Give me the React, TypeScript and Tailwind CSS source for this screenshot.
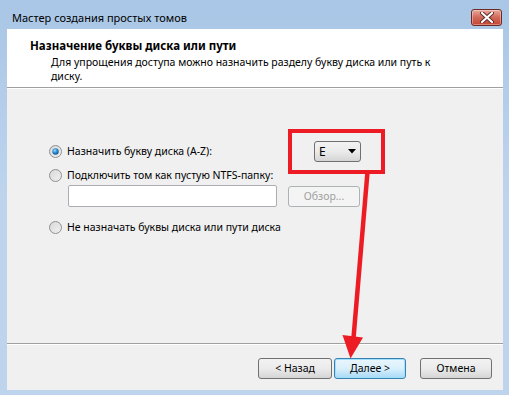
import React from "react";

const font = { fontFamily: '"Noto Sans", "Open Sans", sans-serif' };

function Radio({ checked }: { checked?: boolean }) {
  return (
    <svg width="13" height="13" viewBox="0 0 13 13" className="shrink-0">
      <defs>
        <linearGradient id="rg" x1="0" y1="0" x2="1" y2="1">
          <stop offset="0" stopColor="#d4d4d4" />
          <stop offset="1" stopColor="#f7f7f7" />
        </linearGradient>
        <radialGradient id="dot" cx="0.4" cy="0.35" r="0.7">
          <stop offset="0" stopColor="#a8dcf8" />
          <stop offset="0.5" stopColor="#2a8cd0" />
          <stop offset="1" stopColor="#134e8a" />
        </radialGradient>
      </defs>
      <circle cx="6.5" cy="6.5" r="6" fill="url(#rg)" stroke="#8e8f8f" strokeWidth="1" />
      <circle cx="6.5" cy="6.5" r="4.2" fill="none" stroke="#e2e2e2" strokeWidth="0.8" />
      {checked && <circle cx="6.5" cy="6.5" r="3.2" fill="url(#dot)" />}
    </svg>
  );
}

export default function App() {
  return (
    <div
      className="relative w-[509px] h-[395px] overflow-hidden flex flex-col bg-gradient-to-b from-[#a9c6e6] via-[#bed4ed] to-[#bed4ed] text-[10.5px] text-black"
      style={font}
    >
      {/* Title bar */}
      <div className="h-[29px] flex items-start justify-between pl-[12px] pr-[7px] shrink-0">
        <div className="pt-[10px] text-[11px] leading-[16px] text-black">Мастер создания простых томов</div>
        <div className="mt-[9px] w-[31px] h-[17px] rounded-[3px] border border-[#6b2b24] bg-gradient-to-b from-[#e7a99e] via-[#d0685a] to-[#c8412f] flex items-center justify-center shadow-[inset_0_0_0_1px_rgba(255,255,255,0.35)]">
          <svg width="14" height="11" viewBox="0 0 14 11">
            <path d="M2 1 L12 10 M12 1 L2 10" stroke="#5a2a25" strokeWidth="4" strokeLinecap="round" />
            <path d="M2 1 L12 10 M12 1 L2 10" stroke="#ffffff" strokeWidth="2.2" strokeLinecap="round" />
          </svg>
        </div>
      </div>

      {/* Client area */}
      <div className="flex-1 ml-[7px] mr-[6px] mb-[5px] flex flex-col bg-[#f0f0f0]">
        {/* Header */}
        <div className="h-[59px] bg-white border-b border-[#a0a0a0] pl-[23px] pt-[9px] shrink-0">
          <div className="font-bold text-[11.5px] leading-[16px]">Назначение буквы диска или пути</div>
          <div className="pl-[21px] leading-[14px] pt-[1px]">
            Для упрощения доступа можно назначить разделу букву диска или путь к
            <br />
            диску.
          </div>
        </div>

        {/* Body */}
        <div className="flex-1 border-t border-white pl-[42px] pt-[52px]">
          <div className="flex items-center h-[21px]">
            <div className="flex items-center gap-[5px] w-[265px]">
              <Radio checked />
              <span className="leading-[15px]">Назначить букву диска (A-Z):</span>
            </div>
            <div className="w-[47px] h-[21px] rounded-[3px] border border-[#707070] bg-gradient-to-b from-[#f2f2f2] via-[#ebebeb] to-[#d5d5d5] flex items-center justify-between pl-[4px] pr-[4px] text-[12px]">
              <span className="leading-[15px]">E</span>
              <svg width="8" height="5" viewBox="0 0 8 5">
                <path d="M0 0 H8 L4 4.5 Z" fill="#000" />
              </svg>
            </div>
          </div>

          <div className="flex items-center gap-[5px] mt-[6px] h-[15px]">
            <Radio />
            <span className="leading-[15px]">Подключить том как пустую NTFS-папку:</span>
          </div>

          <div className="flex items-start mt-[2px] ml-[19px] gap-[11px]">
            <div className="w-[209px] h-[22px] bg-white border border-[#abadb3] rounded-[2px]" />
            <div className="w-[72px] h-[21px] mt-[1px] rounded-[3px] border border-[#adb2b5] bg-[#f4f4f4] text-[#a0a0a0] flex items-center justify-center leading-[15px]">
              Обзор...
            </div>
          </div>

          <div className="flex items-center gap-[5px] mt-[13px] h-[15px]">
            <Radio />
            <span className="leading-[15px]">Не назначать буквы диска или пути диска</span>
          </div>
        </div>

        {/* Footer */}
        <div className="h-[47px] border-t border-[#a0a0a0] shrink-0">
          <div className="border-t border-white h-full flex items-start justify-end pr-[11px] pt-[13px]">
            <div className="w-[74px] h-[21px] rounded-[3px] border border-[#707070] bg-gradient-to-b from-[#f2f2f2] via-[#ebebeb] to-[#d5d5d5] flex items-center justify-center leading-[15px]">
              &lt; Назад
            </div>
            <div className="ml-[2px] w-[72px] h-[21px] rounded-[3px] border border-[#3c7fb1] bg-gradient-to-b from-[#eaf6fd] via-[#d9f0fc] to-[#a7d9f5] shadow-[inset_0_0_0_1px_#9fe1fb] flex items-center justify-center leading-[15px]">
              Далее &gt;
            </div>
            <div className="ml-[14px] w-[72px] h-[21px] rounded-[3px] border border-[#707070] bg-gradient-to-b from-[#f2f2f2] via-[#ebebeb] to-[#d5d5d5] flex items-center justify-center leading-[15px]">
              Отмена
            </div>
          </div>
        </div>
      </div>

      {/* Annotation overlay */}
      <svg className="absolute left-0 top-0 pointer-events-none" width="509" height="395" viewBox="0 0 509 395">
        <rect x="290" y="131" width="93" height="41" fill="none" stroke="#ed1c24" strokeWidth="4" />
        <line x1="367.5" y1="172" x2="353.5" y2="338" stroke="#ed1c24" strokeWidth="4.5" />
        <polygon points="342.5,335 363,337.5 350.5,358.5" fill="#ed1c24" />
      </svg>
    </div>
  );
}
